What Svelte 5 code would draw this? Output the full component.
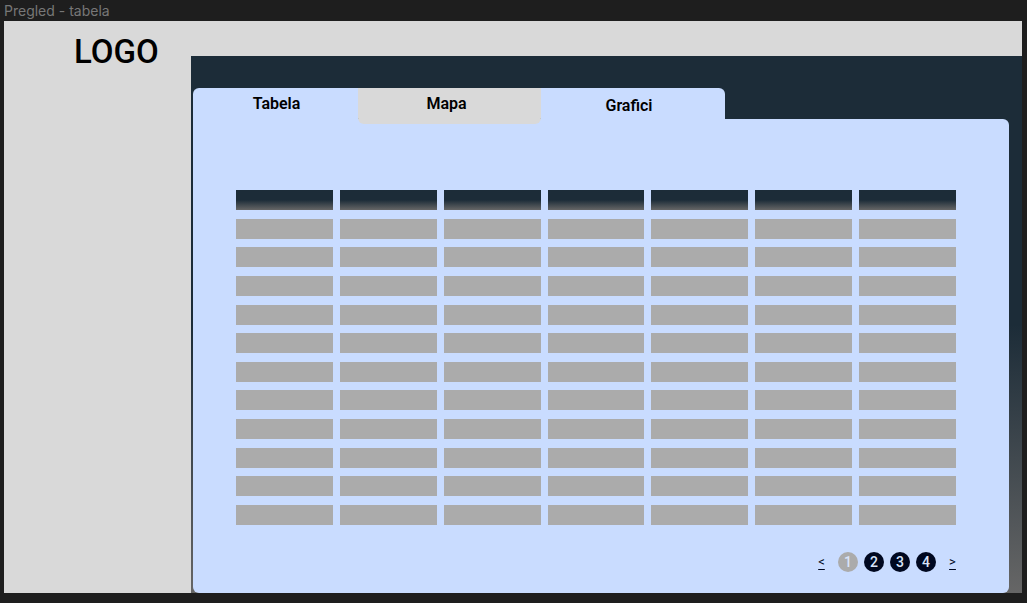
<script>
  const tabs = ['Tabela', 'Mapa', 'Grafici'];
  const columns = Array.from({ length: 7 }, (_, i) => i);
  const rows = Array.from({ length: 11 }, (_, i) => i);
  const pages = [1, 2, 3, 4];
  let current = $state(1);
</script>

<div class="canvas">
  <div class="frame-name">Pregled - tabela</div>
  <div class="frame">
    <aside><div class="logo">LOGO</div></aside>
    <main>
      <nav class="tabs" aria-label="Pregled">
        {#each tabs as tab}
          <button type="button" class="tab {tab.toLowerCase()}">{tab}</button>
        {/each}
      </nav>
      <section>
        <table>
          <thead>
            <tr>{#each columns as column (column)}<th scope="col"></th>{/each}</tr>
          </thead>
          <tbody>
            {#each rows as row (row)}
              <tr>{#each columns as column (column)}<td></td>{/each}</tr>
            {/each}
          </tbody>
        </table>
        <div class="pager">
          <button type="button" class="arrow" onclick={() => (current = Math.max(1, current - 1))}>&lt;</button>
          <div class="pages">
            {#each pages as page (page)}
              <button type="button" class="page" class:current={page === current} onclick={() => (current = page)}>{page}</button>
            {/each}
          </div>
          <button type="button" class="arrow" onclick={() => (current = Math.min(4, current + 1))}>&gt;</button>
        </div>
      </section>
    </main>
  </div>
</div>

<style>
  :global(body) {
    margin: 0;
    background: #1e1e1e;
  }
  .canvas {
    box-sizing: border-box;
    min-height: 100vh;
    padding: 0 5px 10px 4px;
    display: flex;
    flex-direction: column;
    font-family: Roboto, sans-serif;
  }
  .frame-name {
    height: 21px;
    font: 14px/21px Inter, sans-serif;
    color: #777;
  }
  .frame {
    flex: 1;
    display: flex;
    background: #d9d9d9;
  }
  aside {
    width: 187px;
    flex: none;
  }
  .logo {
    padding: 11px 0 0 70px;
    font: 500 33px/40px Roboto, sans-serif;
    color: #000;
  }
  main {
    flex: 1;
    display: flex;
    flex-direction: column;
    margin-top: 35px;
    padding: 32px 13px 0 2px;
    background: linear-gradient(#1c2c38 50%, #666);
  }
  button {
    border: 0;
    padding: 0;
    cursor: pointer;
    font-family: inherit;
  }
  .tabs {
    display: grid;
    grid-template-columns: 165fr 183fr 184fr 284fr;
    height: 31px;
  }
  .tab {
    height: 31px;
    background: #c9dcff;
    font: 600 16px/31px Roboto, sans-serif;
    color: #000;
  }
  .tabela {
    border-radius: 6px 0 0 0;
    padding-left: 2px;
  }
  .mapa {
    position: relative;
    height: 36px;
    background: #d9d9d9;
    border-radius: 0 0 6px 6px;
    padding: 0 6px 6px 0;
  }
  .grafici {
    border-radius: 0 6px 0 0;
    padding: 2px 8px 0 0;
  }
  section {
    flex: 1;
    display: flex;
    flex-direction: column;
    padding: 71px 53px 21px 43px;
    background: #c9dcff;
    border-radius: 0 6px 6px 6px;
  }
  table {
    flex: 1;
    display: flex;
    flex-direction: column;
    justify-content: space-between;
  }
  thead,
  tbody {
    display: contents;
  }
  tr {
    display: grid;
    grid-template-columns: repeat(7, 1fr);
    gap: 7px;
    height: 20px;
  }
  th,
  td {
    padding: 0;
    background: #ababab;
  }
  th {
    background: linear-gradient(#1c2c38 50%, #666);
  }
  .pager {
    display: flex;
    justify-content: flex-end;
    align-items: center;
    gap: 13px;
    margin-top: 27px;
  }
  .pages {
    display: flex;
    gap: 6px;
  }
  .page {
    width: 20px;
    height: 20px;
    border-radius: 50%;
    background: #000820;
    color: #d9e4fa;
    font: 500 14px/20px Roboto, sans-serif;
  }
  .current {
    background: #ababab;
  }
  .arrow {
    width: 7px;
    background: none;
    color: #000820;
    font: 13px/16px Roboto, sans-serif;
    text-decoration: underline;
    text-underline-offset: 3px;
  }
</style>
